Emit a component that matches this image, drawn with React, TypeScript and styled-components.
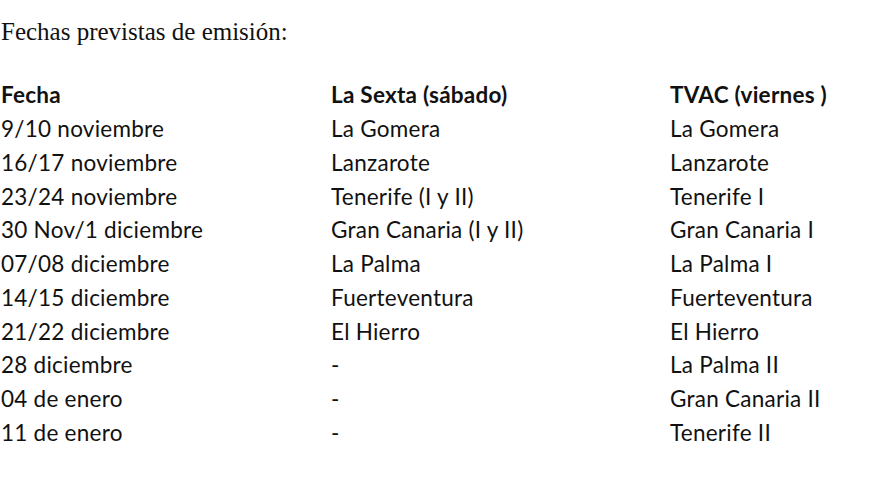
import React from 'react'
import { createGlobalStyle, styled } from 'styled-components'

const GlobalStyle = createGlobalStyle`
  html, body {
    margin: 0;
    padding: 0;
    background: #ffffff;
  }
`

const Page = styled.main`
  width: 880px;
  height: 495px;
  padding: 17px 0 0 1px;
  box-sizing: border-box;
  color: #111;
  overflow: hidden;
`

const Intro = styled.p`
  margin: 0 0 31px;
  font-family: 'Liberation Serif', 'Times New Roman', serif;
  font-size: 25px;
  line-height: 30px;
`

const Table = styled.div`
  display: grid;
  grid-template-columns: 330px 339px 1fr;
  grid-auto-rows: 33.75px;
  align-items: center;
  font-family: Lato, 'Liberation Sans', sans-serif;
  font-size: 22.5px;
  letter-spacing: 0.25px;
`

const Cell = styled.div<{ $head?: boolean }>`
  font-weight: ${(p) => (p.$head ? 700 : 400)};
  white-space: nowrap;
`

const rows: [string, string, string][] = [
  ['9/10 noviembre', 'La Gomera', 'La Gomera'],
  ['16/17 noviembre', 'Lanzarote', 'Lanzarote'],
  ['23/24 noviembre', 'Tenerife (I y II)', 'Tenerife I'],
  ['30 Nov/1 diciembre', 'Gran Canaria (I y II)', 'Gran Canaria I'],
  ['07/08 diciembre', 'La Palma', 'La Palma I'],
  ['14/15 diciembre', 'Fuerteventura', 'Fuerteventura'],
  ['21/22 diciembre', 'El Hierro', 'El Hierro'],
  ['28 diciembre', '-', 'La Palma II'],
  ['04 de enero', '-', 'Gran Canaria II'],
  ['11 de enero', '-', 'Tenerife II'],
]

export default function App() {
  return (
    <Page>
      <GlobalStyle />
      <Intro>Fechas previstas de emisión:</Intro>
      <Table>
        <Cell $head>Fecha</Cell>
        <Cell $head>La Sexta (sábado)</Cell>
        <Cell $head>TVAC (viernes )</Cell>
        {rows.map((r) =>
          r.map((c, i) => <Cell key={r[0] + i}>{c}</Cell>)
        )}
      </Table>
    </Page>
  )
}
